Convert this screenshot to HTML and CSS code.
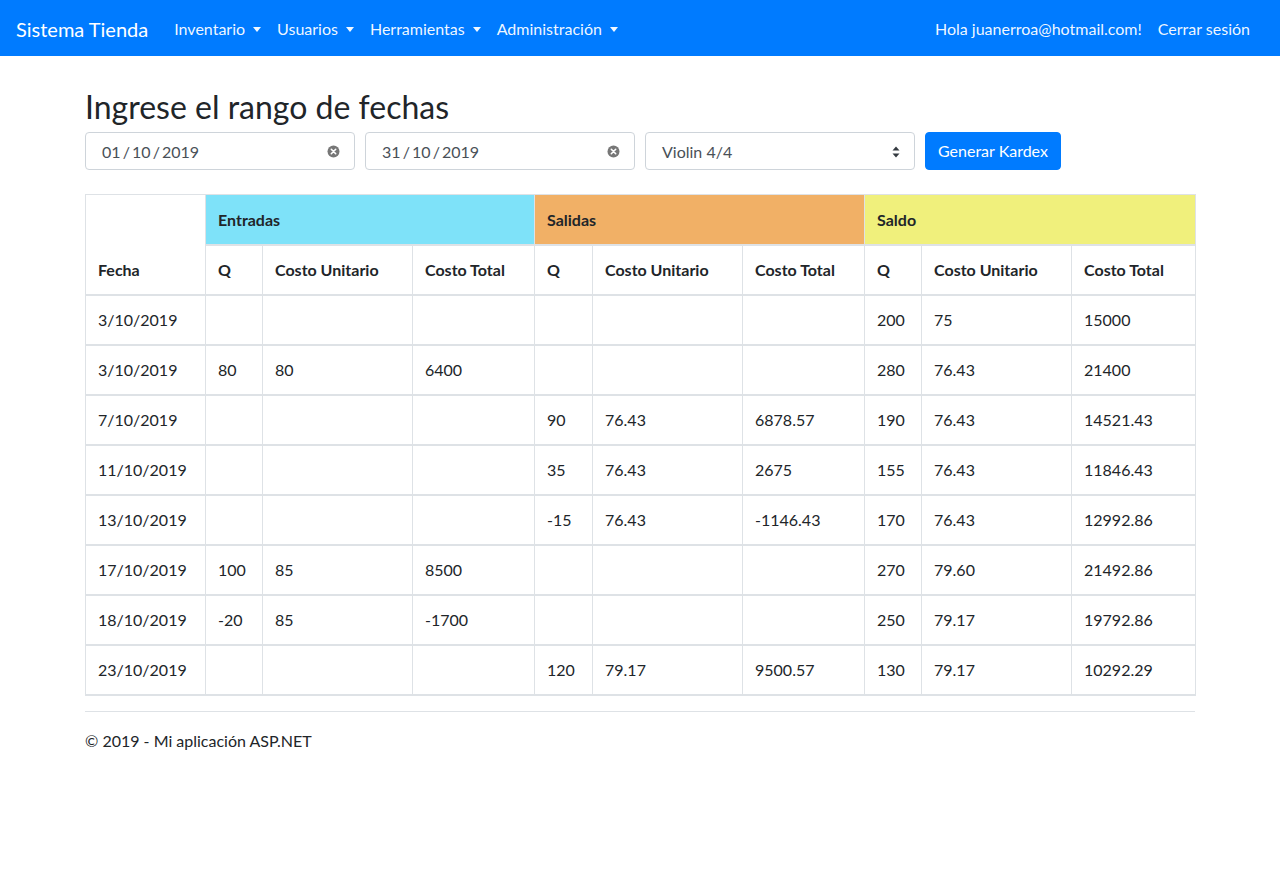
FILE: index.html
```html
<!DOCTYPE html>
<html lang="es">
<head>
<meta charset="utf-8">
<title>Kardex - Sistema Tienda</title>
<link rel="stylesheet" href="styles.css">
</head>
<body>
<nav class="navbar">
  <a class="brand" href="#">Sistema Tienda</a>
  <ul class="nav">
    <li><a class="nav-link dropdown" href="#">Inventario</a></li>
    <li><a class="nav-link dropdown" href="#">Usuarios</a></li>
    <li><a class="nav-link dropdown" href="#">Herramientas</a></li>
    <li><a class="nav-link dropdown" href="#">Administración</a></li>
  </ul>
  <ul class="nav nav-right">
    <li><a class="nav-link" href="#">Hola juanerroa@hotmail.com!</a></li>
    <li><a class="nav-link" href="#">Cerrar sesión</a></li>
  </ul>
</nav>

<main class="container">
  <h2 class="title">Ingrese el rango de fechas</h2>
  <form class="filters">
    <div class="field date">
      <span class="value">01 / 10 / 2019</span>
      <svg class="clear" width="13" height="13" viewBox="0 0 13 13"><circle cx="6.5" cy="6.5" r="6" fill="#777"/><path d="M4.3 4.3l4.4 4.4M8.7 4.3l-4.4 4.4" stroke="#fff" stroke-width="1.6" stroke-linecap="round"/></svg>
    </div>
    <div class="field date">
      <span class="value">31 / 10 / 2019</span>
      <svg class="clear" width="13" height="13" viewBox="0 0 13 13"><circle cx="6.5" cy="6.5" r="6" fill="#777"/><path d="M4.3 4.3l4.4 4.4M8.7 4.3l-4.4 4.4" stroke="#fff" stroke-width="1.6" stroke-linecap="round"/></svg>
    </div>
    <div class="field select">
      <span class="value">Violin 4/4</span>
      <svg class="arrows" width="8" height="12" viewBox="0 0 8 12"><path d="M4 0.5L7.5 4.5H0.5Z M4 11.5L7.5 7.5H0.5Z" fill="#343a40"/></svg>
    </div>
    <button class="btn" type="button">Generar Kardex</button>
  </form>

  <table class="kardex">
    <colgroup>
      <col style="width:120px"><col style="width:57px"><col style="width:150px"><col style="width:122px">
      <col style="width:58px"><col style="width:150px"><col style="width:122px">
      <col style="width:57px"><col style="width:150px"><col style="width:124px">
    </colgroup>
    <thead>
      <tr class="group-row">
        <th rowspan="2" class="fecha">Fecha</th>
        <th colspan="3" class="entradas">Entradas</th>
        <th colspan="3" class="salidas">Salidas</th>
        <th colspan="3" class="saldo">Saldo</th>
      </tr>
      <tr>
        <th>Q</th><th>Costo Unitario</th><th>Costo Total</th>
        <th>Q</th><th>Costo Unitario</th><th>Costo Total</th>
        <th>Q</th><th>Costo Unitario</th><th>Costo Total</th>
      </tr>
    </thead>
    <tbody>
      <tr><td>3/10/2019</td><td></td><td></td><td></td><td></td><td></td><td></td><td>200</td><td>75</td><td>15000</td></tr>
      <tr><td>3/10/2019</td><td>80</td><td>80</td><td>6400</td><td></td><td></td><td></td><td>280</td><td>76.43</td><td>21400</td></tr>
      <tr><td>7/10/2019</td><td></td><td></td><td></td><td>90</td><td>76.43</td><td>6878.57</td><td>190</td><td>76.43</td><td>14521.43</td></tr>
      <tr><td>11/10/2019</td><td></td><td></td><td></td><td>35</td><td>76.43</td><td>2675</td><td>155</td><td>76.43</td><td>11846.43</td></tr>
      <tr><td>13/10/2019</td><td></td><td></td><td></td><td>-15</td><td>76.43</td><td>-1146.43</td><td>170</td><td>76.43</td><td>12992.86</td></tr>
      <tr><td>17/10/2019</td><td>100</td><td>85</td><td>8500</td><td></td><td></td><td></td><td>270</td><td>79.60</td><td>21492.86</td></tr>
      <tr><td>18/10/2019</td><td>-20</td><td>85</td><td>-1700</td><td></td><td></td><td></td><td>250</td><td>79.17</td><td>19792.86</td></tr>
      <tr><td>23/10/2019</td><td></td><td></td><td></td><td>120</td><td>79.17</td><td>9500.57</td><td>130</td><td>79.17</td><td>10292.29</td></tr>
    </tbody>
  </table>

  <hr class="divider">
  <footer class="footer">
    <p>© 2019 - Mi aplicación ASP.NET</p>
  </footer>
</main>
</body>
</html>
```

FILE: styles.css
```css
* { box-sizing: border-box; }
html, body { margin: 0; padding: 0; }
body {
  font-family: "Lato", "Noto Sans", sans-serif;
  font-size: 16px;
  line-height: 24px;
  color: #212529;
  background: #fff;
}
a { text-decoration: none; }

.navbar {
  display: flex;
  align-items: center;
  height: 56px;
  padding: 9px 16px 7px;
  background: #007bff;
}
.brand {
  color: #fff;
  font-size: 20px;
  line-height: 30px;
  margin-right: 18px;
  padding: 5px 0;
}
.nav {
  display: flex;
  list-style: none;
  margin: 0;
  padding: 0;
}
.nav-right { margin-left: auto; margin-right: 6px; }
.nav-link {
  display: block;
  color: rgba(255,255,255,0.95);
  padding: 8px 8px;
}
.dropdown::after {
  content: "";
  display: inline-block;
  margin-left: 8px;
  vertical-align: 3px;
  border-top: 5px solid;
  border-left: 4px solid transparent;
  border-right: 4px solid transparent;
}

.container {
  width: 1110px;
  margin: 0 auto;
  padding-top: 32px;
}
.title {
  margin: 0 0 6px;
  font-size: 32px;
  font-weight: 400;
  line-height: 38px;
}

.filters {
  display: flex;
  gap: 10px;
  margin-bottom: 24px;
}
.field {
  display: flex;
  align-items: center;
  justify-content: space-between;
  width: 270px;
  height: 38px;
  padding: 1px 14px 0 16px;
  border: 1px solid #ced4da;
  border-radius: 4px;
  color: #495057;
}
.field.select { padding-left: 16px; padding-right: 14px; }
.field .value { white-space: pre; }
.field.date .value { word-spacing: -2px; }
.btn {
  height: 38px;
  padding: 0 12px;
  border: 1px solid #007bff;
  border-radius: 4px;
  background: #007bff;
  color: #fff;
  font: inherit;
}

.kardex {
  width: 1110px;
  table-layout: fixed;
  border-collapse: collapse;
  border: 1px solid #dee2e6;
}
.kardex th, .kardex td {
  border: 1px solid #dee2e6;
  border-bottom-width: 2px;
  padding: 12px;
  height: 50px;
  text-align: left;
  vertical-align: top;
  white-space: nowrap;
}
.kardex th { font-weight: 700; vertical-align: bottom; }
.kardex td { font-weight: 400; }
.kardex .group-row th { vertical-align: middle; padding-top: 13px; padding-bottom: 11px; }
.kardex .group-row th.fecha { vertical-align: bottom; padding-top: 12px; padding-bottom: 12px; }
.entradas { background: #7ee2f9; }
.salidas { background: #f1b066; }
.saldo { background: #f0f07c; }

.divider {
  margin: 15px 0 0;
  border: 0;
  border-top: 1px solid #dee2e6;
}
.footer p { margin: 17px 0 0; }
```
